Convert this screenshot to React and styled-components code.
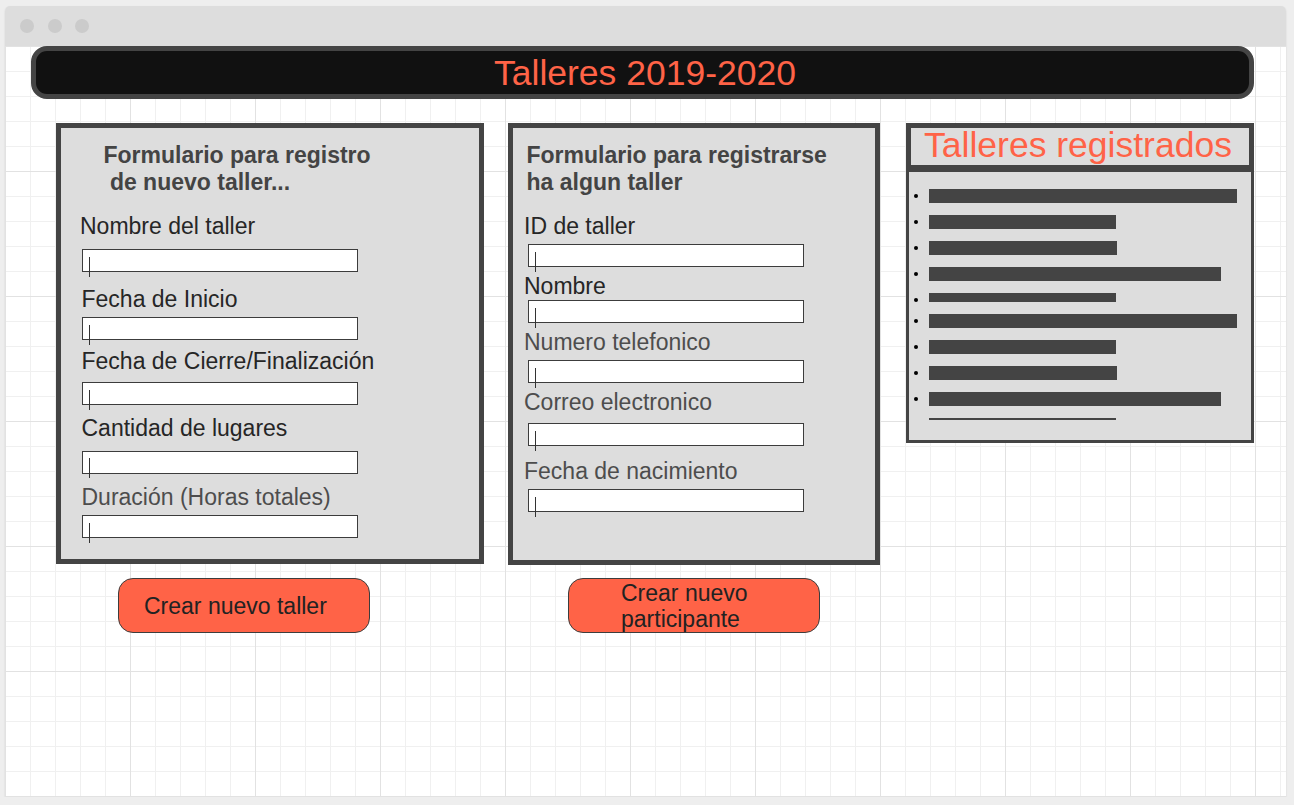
import React from 'react';
import styled, { createGlobalStyle } from 'styled-components';

const Global = createGlobalStyle`
  html, body { margin: 0; padding: 0; background: #eeeeee; }
  body { font-family: "Liberation Sans", Arial, sans-serif; }
  * { box-sizing: border-box; }
`;

const Frame = styled.div`
  margin: 6px 0 0 5px;
  width: 1281px;
  height: 791px;
  display: flex;
  flex-direction: column;
  border-radius: 5px 5px 0 0;
  overflow: hidden;
  box-shadow: 0 1px 2px rgba(0, 0, 0, 0.12);
`;

const TitleBar = styled.div`
  flex: none;
  height: 40px;
  background: #dddddd;
  display: flex;
  align-items: center;
  gap: 13.5px;
  padding-left: 15px;
`;

const Dot = styled.span`
  width: 14px;
  height: 14px;
  border-radius: 50%;
  background: #cbcbcb;
`;

const Canvas = styled.div`
  flex: 1;
  background-color: #ffffff;
  background-image:
    linear-gradient(to right, #e2e2e2 1px, transparent 1px),
    linear-gradient(to bottom, #e2e2e2 1px, transparent 1px),
    linear-gradient(to right, #f0f0f0 1px, transparent 1px),
    linear-gradient(to bottom, #f0f0f0 1px, transparent 1px);
  background-size: 125px 125px, 125px 125px, 25px 25px, 25px 25px;
`;

const HeaderBar = styled.div`
  margin-left: 26px;
  width: 1223px;
  height: 53px;
  border: 5px solid #444444;
  border-radius: 16px;
  background: #111111;
  color: #ff6347;
  font-size: 35.5px;
  line-height: 44px;
  text-align: center;
  padding-left: 5px;
  white-space: nowrap;
`;

const Columns = styled.div`
  display: flex;
  align-items: flex-start;
  gap: 24px;
  margin-top: 24px;
  padding-left: 51px;
`;

const Column = styled.div`
  display: flex;
  flex-direction: column;
  width: ${(p) => p.$w}px;
  margin-left: ${(p) => p.$ml || 0}px;
`;

const Panel = styled.div`
  width: 100%;
  height: ${(p) => p.$h}px;
  border: 5px solid #444444;
  background: #dddddd;
  padding: 13.5px 0 0 ${(p) => p.$pl}px;
  display: flex;
  flex-direction: column;
  align-items: flex-start;
`;

const FormTitle = styled.div`
  margin-left: ${(p) => p.$x}px;
  font-weight: bold;
  font-size: 23px;
  line-height: 27px;
  color: #444444;
  white-space: pre;
`;

const Label = styled.div`
  margin-top: ${(p) => p.$mt}px;
  margin-left: ${(p) => p.$x || 0}px;
  font-size: 23px;
  line-height: 27px;
  color: ${(p) => (p.$muted ? '#4d4d4d' : '#262626')};
  white-space: nowrap;
`;

const InputBox = styled.div`
  position: relative;
  margin-top: ${(p) => p.$mt}px;
  margin-left: ${(p) => p.$x}px;
  width: 276px;
  height: 23px;
  border: 1px solid #3c3c3c;
  background: #ffffff;

  &::after {
    content: '';
    position: absolute;
    left: 6px;
    top: 6.5px;
    width: 1.4px;
    height: 20px;
    background: #333333;
  }
`;

const ActionButton = styled.button`
  margin-top: ${(p) => p.$mt}px;
  margin-left: ${(p) => p.$ml}px;
  width: 252px;
  height: 55px;
  display: flex;
  align-items: center;
  padding: 0 0 0 ${(p) => p.$pl}px;
  background: #ff6347;
  border: 1px solid #3d3d3d;
  border-radius: 15px;
  font-family: "Liberation Sans", Arial, sans-serif;
  font-size: 23px;
  line-height: 26px;
  color: #222222;
  text-align: left;
  white-space: pre;
`;

const RegHeader = styled.div`
  height: 47px;
  border: 5px solid #444444;
  background: #dddddd;
  color: #ff6347;
  font-size: 35.5px;
  line-height: 35px;
  text-align: center;
  padding-right: 4px;
  white-space: nowrap;
  overflow: hidden;
`;

const RegList = styled.ul`
  margin: 0;
  list-style: none;
  border: 3px solid #444444;
  border-top-width: 2px;
  background: #dddddd;
  padding: 17px 0 20.5px 20px;
  display: flex;
  flex-direction: column;
  gap: 12px;
`;

const RegItem = styled.li`
  position: relative;
  width: ${(p) => p.$w}px;
  height: ${(p) => p.$h}px;
  background: #444444;

  &::before {
    content: '';
    display: ${(p) => (p.$bullet ? 'block' : 'none')};
    position: absolute;
    left: -15px;
    top: 5px;
    width: 4px;
    height: 4px;
    border-radius: 50%;
    background: #000000;
  }
`;

const form1 = [
  { label: 'Nombre del taller', lmt: 17.5, lx: 0, imt: 9 },
  { label: 'Fecha de Inicio', lmt: 14, lx: 1.5, imt: 4 },
  { label: 'Fecha de Cierre/Finalización', lmt: 8, lx: 1.5, imt: 7 },
  { label: 'Cantidad de lugares', lmt: 9.5, lx: 1.5, imt: 9 },
  { label: 'Duración (Horas totales)', lmt: 10, lx: 1.5, imt: 4.5, muted: true },
];

const form2 = [
  { label: 'ID de taller', lmt: 17.5, lx: 0, imt: 4 },
  { label: 'Nombre', lmt: 5.5, lx: 0, imt: 0.5 },
  { label: 'Numero telefonico', lmt: 6, lx: 0, imt: 4, muted: true },
  { label: 'Correo electronico', lmt: 5.5, lx: 0, imt: 7.5, muted: true },
  { label: 'Fecha de nacimiento', lmt: 11.5, lx: 0, imt: 4.5, muted: true },
];

const bars = [
  { w: 308, h: 14, b: true },
  { w: 187, h: 14, b: true },
  { w: 188, h: 14, b: true },
  { w: 292, h: 14, b: true },
  { w: 187, h: 9, b: true },
  { w: 308, h: 14, b: true },
  { w: 187, h: 14, b: true },
  { w: 188, h: 14, b: true },
  { w: 292, h: 14, b: true },
  { w: 187, h: 1.5, b: false },
];

function Fields({ items, inputX }) {
  return items.map((f) => (
    <React.Fragment key={f.label}>
      <Label $mt={f.lmt} $x={f.lx} $muted={f.muted}>{f.label}</Label>
      <InputBox $mt={f.imt} $x={inputX} />
    </React.Fragment>
  ));
}

export default function App() {
  return (
    <>
      <Global />
      <Frame>
        <TitleBar>
          <Dot />
          <Dot />
          <Dot />
        </TitleBar>
        <Canvas>
          <HeaderBar>Talleres 2019-2020</HeaderBar>
          <Columns>
            <Column $w={428}>
              <Panel $h={441} $pl={19}>
                <FormTitle $x={23.5}>{'Formulario para registro\n de nuevo taller...'}</FormTitle>
                <Fields items={form1} inputX={2} />
              </Panel>
              <ActionButton $mt={14} $ml={62} $pl={25}>Crear nuevo taller</ActionButton>
            </Column>
            <Column $w={372}>
              <Panel $h={442} $pl={11}>
                <FormTitle $x={2.5}>{'Formulario para registrarse\nha algun taller'}</FormTitle>
                <Fields items={form2} inputX={4} />
              </Panel>
              <ActionButton $mt={13} $ml={60} $pl={52}>{'Crear nuevo\nparticipante'}</ActionButton>
            </Column>
            <Column $w={348} $ml={2}>
              <RegHeader>Talleres registrados</RegHeader>
              <RegList>
                {bars.map((b, i) => (
                  <RegItem key={i} $w={b.w} $h={b.h} $bullet={b.b} />
                ))}
              </RegList>
            </Column>
          </Columns>
        </Canvas>
      </Frame>
    </>
  );
}
